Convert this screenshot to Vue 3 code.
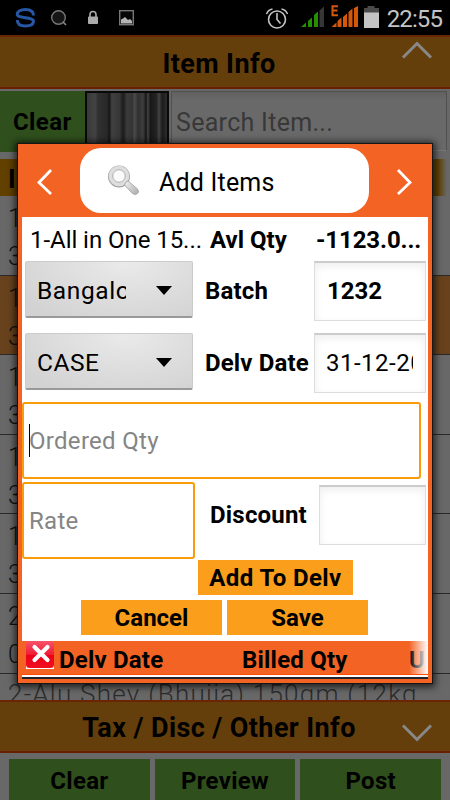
<script setup>
const rows = [
  { code: '1', qty: '3' },
  { code: '1', qty: '3', active: true },
  { code: '1', qty: '3' },
  { code: '1', qty: '3' },
  { code: '1', qty: '3' },
  { code: '2', qty: '0' }
]
</script>

<template>
  <div class="screen">
    <header class="status">
      <svg class="status-icons" width="450" height="35" viewBox="0 0 450 35">
        <g fill="none" stroke="#2557a4" stroke-width="3">
          <path d="M33.500 15.500C33.500 11 29.500 9.500 25.500 9.500C20.500 9.500 17.300 11.500 17.300 14.500C17.300 18.500 33.500 17 33.500 21C33.500 24.500 30 26 25.500 26C20.500 26 17.300 24 17.300 20" />
        </g>
        <circle cx="58.500" cy="17.500" r="6.800" fill="#151515" stroke="#777" stroke-width="1.400" />
        <path d="M63 22l3 3" stroke="#888" stroke-width="1.600" />
        <rect x="88" y="16.500" width="10" height="7.500" rx=".8" fill="#aaa" />
        <path d="M90 17v-2.500a3 3 0 0 1 6 0V17" fill="none" stroke="#aaa" stroke-width="1.600" />
        <rect x="119.700" y="10.700" width="13.600" height="14" fill="#080808" stroke="#777" stroke-width="1.400" />
        <path d="M121 23.500v-4l2-1 2-1.500 3 3 2-1 2 2v2.500z" fill="#b4b4b4" />
        <g fill="none" stroke="#c4c4c4" stroke-width="1.600">
          <circle cx="277" cy="19.500" r="8.500" />
          <path d="M277 13v6.500l3.500 4M266.500 14a8 8 0 0 1 6-5M281.500 9a8 8 0 0 1 6 5" />
        </g>
        <path d="M301 27l5-4.500V27zM308 21l4-3.500V27h-4zM314 15l4-3.500V27h-4z" fill="#249000" />
        <path d="M319.500 10.500l4.500-4V27h-4.500z" fill="#363636" />
        <path d="M331.500 27l5-4.500V27zM337.500 21l4-3.500V27h-4zM343 17l4-3.500V27h-4zM348.500 12l4-3.500V27h-4zM354 8l4-2v21h-4z" fill="#d4570a" />
        <path d="M338 6.200h-5.500v9H338M332.500 10.500h5" fill="none" stroke="#d4570a" stroke-width="2" />
        <path d="M367.500 6h7v2h4.500v5h-15V8h3.500z" fill="#4a4a4a" />
        <rect x="364" y="12.500" width="15" height="15.500" fill="#c4c4c4" />
      </svg>
      <span class="clock">22:55</span>
    </header>

    <section class="bar">
      <span class="item-info">Item Info</span>
      <svg class="chevron up" width="32" height="19" viewBox="0 0 32 19"><path d="M2 16.500L16 2.500l14 14" /></svg>
    </section>

    <section class="search">
      <div class="search-clear">Clear</div>
      <div class="barcode"></div>
      <div class="search-input">Search Item...</div>
    </section>

    <div class="list-head">I</div>
    <div class="list">
      <div v-for="(row, i) in rows" :key="i" class="list-row" :class="{ active: row.active }">
        <span>{{ row.code }}</span>
        <span>{{ row.qty }}</span>
      </div>
      <div class="list-last"><span>2-Alu Shev (Bhujia) 150gm (12kg</span></div>
    </div>

    <section class="bar bottom">
      <span class="tax-info">Tax / Disc / Other Info</span>
      <svg class="chevron down" width="32" height="19" viewBox="0 0 32 19"><path d="M2 2.500l14 14 14-14" /></svg>
    </section>
    <footer class="actions">
      <div>Clear</div>
      <div>Preview</div>
      <div>Post</div>
    </footer>

    <div class="dialog">
      <div class="dialog-head">
        <svg width="16" height="28" viewBox="0 0 16 28"><path d="M14 2L2 14.500 14 26" /></svg>
        <div class="pill">
          <svg class="magnifier" width="36" height="34" viewBox="0 0 36 34">
            <defs>
              <linearGradient id="handle" x1="0" y1="0" x2="1" y2="1">
                <stop offset="0" stop-color="#f4f4f4" />
                <stop offset="1" stop-color="#a9a9a9" />
              </linearGradient>
            </defs>
            <circle cx="13" cy="12.500" r="8.500" fill="#fff" stroke="#a2a2a2" stroke-width="5" />
            <circle cx="13" cy="12" r="8.500" fill="#fafafa" stroke="#dedede" stroke-width="3.600" />
            <circle cx="13" cy="12" r="6.300" fill="none" stroke="#aaa" stroke-width="1" />
            <path d="M19.500 18.500l2.500-1.500 9 7.500q3 3 .5 5t-5 0l-8-8.500z" fill="url(#handle)" stroke="#aaa" stroke-width="1" />
          </svg>
          <span>Add Items</span>
        </div>
        <svg width="16" height="28" viewBox="0 0 16 28"><path d="M2 2l12 12.500L2 26" /></svg>
      </div>

      <div class="form">
        <div class="summary">
          <span class="product">1-All in One 15...</span>
          <span class="avl">Avl Qty</span>
          <span class="quantity">-1123.0...</span>
        </div>
        <div class="pair">
          <div class="spinner"><span class="branch">Bangalore</span><i></i></div>
          <span class="batch">Batch</span>
          <div class="field"><span class="batch-no">1232</span></div>
        </div>
        <div class="pair">
          <div class="spinner"><span class="unit">CASE</span><i></i></div>
          <span class="delv">Delv Date</span>
          <div class="field"><span class="date">31-12-2014</span></div>
        </div>
        <div class="edit ordered"><i></i><span>Ordered Qty</span></div>
        <div class="rate-row">
          <div class="edit rate"><span>Rate</span></div>
          <span class="discount">Discount</span>
          <div class="field small"></div>
        </div>
        <div class="button add"><span>Add To Delv</span></div>
        <div class="buttons">
          <div class="button"><span class="cancel">Cancel</span></div>
          <div class="button"><span class="save">Save</span></div>
        </div>
      </div>

      <div class="table-head">
        <svg width="28" height="28" viewBox="0 0 28 28">
          <defs>
            <linearGradient id="red" x1="0" y1="0" x2="0" y2="1">
              <stop offset="0" stop-color="#f7546c" />
              <stop offset=".5" stop-color="#ef1c34" />
              <stop offset=".52" stop-color="#ec0018" />
              <stop offset="1" stop-color="#f01020" />
            </linearGradient>
          </defs>
          <path d="M0 23h28v5H0z" fill="#fff" />
          <rect width="28" height="27" rx="3.500" fill="url(#red)" />
          <path d="M8.500 6l13 13M21.500 6l-13 13" stroke="#fff" stroke-width="4.200" stroke-linecap="round" />
        </svg>
        <span class="col-date">Delv Date</span>
        <span class="col-billed">Billed Qty</span>
        <span class="col-unit">U</span>
      </div>
      <div class="table-line"></div>
    </div>
  </div>
</template>

<style>
body { background: #686868; overflow: hidden; }
</style>

<style scoped>
* { box-sizing: border-box; }
.screen {
  position: relative; display: flex; flex-direction: column;
  width: 450px; height: 800px; overflow: hidden;
  background: #686868; color: #000;
  font: 700 24px/30px Roboto, sans-serif;
}
span { white-space: nowrap; }
.status { position: relative; flex: none; height: 35px; background: #000; display: flex; justify-content: flex-end; padding: 4px 8px 0 0; }
.status-icons { position: absolute; left: 0; top: 0; }
.clock { color: #c4c4c4; font-weight: 400; font-size: 24px; line-height: 30px; letter-spacing: -.9px; }
.bar {
  position: relative; flex: none; height: 54px; display: flex; align-items: center; justify-content: center;
  background: #653f0b; border-top: 2px solid #6a2505; border-bottom: 2px solid #6a2000;
  font-size: 27px; padding-top: 3px; letter-spacing: .4px;
}
.bar span { padding-right: 12px; }
.chevron { position: absolute; left: 401px; fill: none; stroke: #888; stroke-width: 3; }
.chevron.up { top: 4px; }
.chevron.down { top: 21px; }
.search { display: flex; flex: none; height: 70px; padding-top: 2px; align-items: flex-start; }
.search-clear { width: 85px; height: 61px; background: #2f4f1c; padding: 16px 0 0 13px; letter-spacing: .4px; }
.barcode {
  width: 84px; height: 61px; border: 2px solid #080808;
  background: linear-gradient(90deg, #383838, #434343 10%, #303030 14%, #292929 25%, #171717 28%, #404040 31%, #363636 41%, #1b1b1b 45%, #3b3b3b 50%, #343434 57%, #4c4c4c 59%, #303030 64%, #3e3e3e 70%, #151515 74%, #444 76%, #171717 79%, #242424 87%, #444 90%, #1b1b1b 94%, #2d2d2d);
}
.search-input {
  margin-left: 2px; width: 276px; height: 60px; border: 1px solid #505050; border-bottom-color: #777;
  background: linear-gradient(#606060, #696969 8px); color: #383838; font-weight: 400; font-size: 25px; padding: 16px 0 0 4px; letter-spacing: .3px;
}
.list-head { flex: none; width: 447px; height: 37px; background: linear-gradient(90deg, #614000 438px, #686868); padding: 5px 0 0 8px; font-size: 26px; }
.list { flex: 1; overflow: hidden; font-weight: 300; font-size: 25px; color: #101010; }
.list-row { height: 79.600px; display: flex; flex-direction: column; padding: 8px 0 0 8px; gap: 8px; border-bottom: 1px solid #292929; }
.list-row.active { background: #68421d; }
.list-last { padding: 5px 0 0 8px; color: #2c2c2c; font-size: 26px; letter-spacing: 1.250px; }
.bar.bottom { height: 53px; }
.actions { flex: none; display: flex; height: 47px; padding: 6px 9px 0; gap: 5px; }
.actions div { flex: 1; background: #2f4f1c; text-align: center; padding-top: 7px; height: 41px; letter-spacing: .3px; }

.dialog {
  position: absolute; left: 17px; top: 143px; width: 416px; height: 541px; overflow: visible;
  background: #f26324; border: 1px solid #161616; box-shadow: 0 1px 7px 2px rgba(0, 0, 0, .7);
  padding: 0 4px;
}
.dialog-head { height: 73px; display: flex; align-items: center; justify-content: space-between; padding: 0 16px 0 15px; }
.dialog-head > svg { fill: none; stroke: #fff; stroke-width: 2.800; margin-top: 2px; }
.pill { width: 289px; height: 65px; border-radius: 21px; background: #fff; display: flex; align-items: center; padding-left: 26px; font-weight: 400; font-size: 25px; }
.magnifier { margin-top: 1px; }
.pill span { margin-left: 17px; padding-top: 4px; letter-spacing: .2px; }
.form { height: 424px; background: #fff; }
.summary { display: flex; height: 44px; padding: 8px 0 0 8px; }
.summary span { flex: none; }
.product { width: 180px; font-weight: 400; letter-spacing: -.05px; }
.avl { width: 106px; }
.quantity { letter-spacing: -.1px; }
.pair { display: flex; height: 72px; padding-left: 3px; align-items: flex-start; }
.spinner {
  width: 168px; height: 57px; display: flex; align-items: center; padding: 3px 20px 0 11px; justify-content: space-between;
  border: 1px solid #ccc; border-bottom: 2px solid #999; border-radius: 2px;
  background: radial-gradient(ellipse at 60% 0, #eaeaea, #d2d2d2 90%); font-weight: 400; font-size: 24.500px;
}
.spinner span { width: 89px; overflow: hidden; }
.spinner .branch { letter-spacing: .6px; }
.spinner .unit { letter-spacing: .5px; }
.spinner i { border: 8px solid transparent; border-top: 9px solid #000; border-bottom: 0; }
.batch, .delv { width: 109px; margin-left: 12px; padding-top: 15px; flex: none; letter-spacing: .15px; }
.field {
  width: 112px; height: 60px; overflow: hidden; border: 1px solid #ddd; border-top: 2px solid #ccc;
  background: #fff; box-shadow: inset 0 3px 9px rgba(0, 0, 0, .07); padding: 13px 12px 0 11px;
}
.field span { display: block; overflow: hidden; }
.batch-no { padding-left: 1px; }
.date { font-weight: 400; letter-spacing: .5px; }
.edit { border: 2px solid #fa9b0a; border-radius: 3px; color: #858585; font-weight: 400; display: flex; align-items: center; padding-left: 5px; letter-spacing: .3px; }
.ordered { position: relative; width: 399px; height: 77px; margin-top: -3px; }
.ordered span { padding-top: 1px; }
.ordered i { position: absolute; left: 5px; top: 20px; height: 33px; width: 1px; background: #000; }
.rate-row { height: 78px; margin-top: 3px; display: flex; align-items: flex-start; }
.rate { width: 173px; height: 77px; }
.discount { width: 109px; margin-left: 15px; padding-top: 18px; flex: none; letter-spacing: .2px; }
.field.small { width: 107px; margin-top: 3px; }
.button { width: 141px; height: 35px; background: #fa9e1b; display: flex; align-items: center; justify-content: center; padding-top: 1px; }
.button.add { width: 155px; margin-left: 176px; }
.button.add span { letter-spacing: .4px; }
.buttons { display: flex; gap: 5px; margin-top: 5px; padding-left: 59px; }
.table-head {
  position: relative; height: 34px; overflow: hidden; display: flex; padding: 0 0 0 4px;
  border-bottom: 1px solid #ff4c00;
}
.table-head svg { margin-right: 5px; flex: none; }
.table-head span { padding-top: 4px; flex: none; letter-spacing: .2px; }
.col-date { width: 183px; }
.col-billed { width: 167px; }
.table-head::after { content: ''; position: absolute; right: 0; top: 0; width: 19px; height: 34px; background: linear-gradient(90deg, transparent, #fff); }
.table-line { height: 4px; border-top: 2px solid #fff; border-bottom: 2px solid #22242a; }
</style>
